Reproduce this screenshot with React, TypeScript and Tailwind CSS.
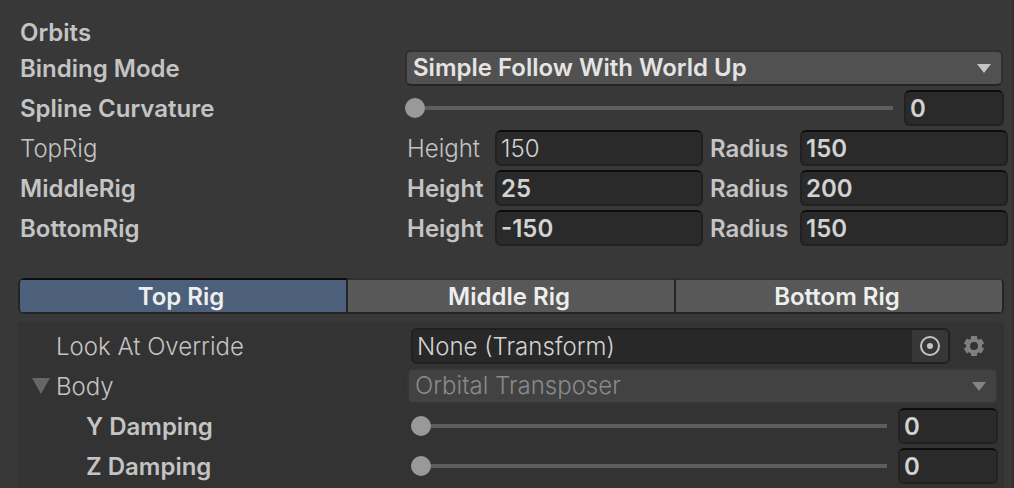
import { useState } from "react";

const rigs = [
    { name: "TopRig", height: "150", radius: "150", heightClass: "font-light" },
    { name: "MiddleRig", height: "25", radius: "200", heightClass: "font-semibold" },
    { name: "BottomRig", height: "-150", radius: "150", heightClass: "font-semibold" },
];

const tabs = ["Top Rig", "Middle Rig", "Bottom Rig"];

const field =
    "h-9 min-w-0 rounded-md border-2 border-[#212121] border-t-[#0d0d0d] bg-[#2a2a2a] pt-0.5 pl-1 text-[#d2d2d2] outline-none";

function Arrow({ className }: { className: string }) {
    return (
        <svg viewBox="0 0 14 9" className={className} aria-hidden="true">
            <path d="M0 0h14L7 9z" fill="currentColor" />
        </svg>
    );
}

function Slider({ id, name }: { id: string; name: string }) {
    const [value, setValue] = useState("0");

    return (
        <div className="flex flex-1 items-center gap-[11px]">
            <input
                id={id}
                type="range"
                min="0"
                max="20"
                value={value}
                onChange={(e) => setValue(e.target.value)}
                className="h-5 min-w-0 flex-1 appearance-none bg-transparent [&::-webkit-slider-runnable-track]:h-1 [&::-webkit-slider-runnable-track]:bg-[#5e5e5e] [&::-webkit-slider-thumb]:-mt-2 [&::-webkit-slider-thumb]:size-5 [&::-webkit-slider-thumb]:appearance-none [&::-webkit-slider-thumb]:rounded-full [&::-webkit-slider-thumb]:bg-[#999999]"
            />
            <input
                type="text"
                aria-label={name + " value"}
                value={value}
                onChange={(e) => setValue(e.target.value)}
                className={`${field} w-25 font-semibold`}
            />
        </div>
    );
}

export default function App() {
    const [tab, setTab] = useState("Top Rig");

    return (
        <div className="flex min-h-screen flex-col border-r-2 border-[#303030] bg-[#383838] pt-3.5 font-['Inter',sans-serif] text-2xl leading-[38px] text-[#c4c4c4]">
            <div className="pr-2 pl-5">
                <h1 className="h-9 font-semibold">Orbits</h1>

                <div className="flex flex-col gap-1">
                    <div className="flex h-9">
                        <label htmlFor="binding" className="w-[385px] shrink-0 font-semibold">Binding Mode</label>
                        <div className="relative mr-px flex-1">
                            <select
                                id="binding"
                                className="block h-9 w-full appearance-none rounded-md border-2 border-[#303030] border-b-[#242424] bg-[#515151] pl-1.5 leading-8 font-semibold text-[#e4e4e4] outline-none"
                            >
                                <option>Simple Follow With World Up</option>
                            </select>
                            <Arrow className="pointer-events-none absolute top-3.5 right-3 h-[9px] w-3.5 text-[#c4c4c4]" />
                        </div>
                    </div>

                    <div className="flex h-9">
                        <label htmlFor="spline" className="w-[385px] shrink-0 font-semibold">Spline Curvature</label>
                        <Slider id="spline" name="Spline Curvature" />
                    </div>

                    {rigs.map((rig) => (
                        <div key={rig.name} className="-mr-1 flex h-9">
                            <span className={`w-[387px] shrink-0 ${rig.heightClass}`}>{rig.name}</span>
                            <label htmlFor={rig.name + "-height"} className={`w-[88px] shrink-0 ${rig.heightClass}`}>Height</label>
                            <input
                                id={rig.name + "-height"}
                                type="text"
                                defaultValue={rig.height}
                                className={`${field} flex-1 ${rig.heightClass}`}
                            />
                            <label htmlFor={rig.name + "-radius"} className="ml-[7px] w-[90px] shrink-0 font-semibold">Radius</label>
                            <input
                                id={rig.name + "-radius"}
                                type="text"
                                defaultValue={rig.radius}
                                className={`${field} flex-1 font-semibold`}
                            />
                        </div>
                    ))}
                </div>
            </div>

            <div className="mt-8 mr-2 ml-[18px] flex overflow-hidden rounded-md border-x-2 border-[#242424]">
                {tabs.map((name) => (
                    <button
                        key={name}
                        type="button"
                        onClick={() => setTab(name)}
                        className={`h-9 flex-1 border-y-2 border-r-2 border-[#242424] pt-px pr-1 leading-8 font-semibold text-[#eeeeee] last:border-r-0 ${
                            tab === name ? "border-t-[#0d0d0d] bg-[#4c5f7b]" : "border-t-[#303030] bg-[#585858]"
                        }`}
                    >
                        {name}
                    </button>
                ))}
            </div>

            <div className="mt-2 mr-2 ml-[18px] flex flex-1 flex-col gap-1 bg-[#333333] pt-1.5 pr-1.5">
                <div className="flex h-9">
                    <label htmlFor="lookAt" className="w-[393px] shrink-0 pl-[38px] font-light">Look At Override</label>
                    <div className="flex min-w-0 flex-1 overflow-hidden rounded-md border-2 border-[#202020] bg-[#282828]">
                        <input
                            id="lookAt"
                            type="text"
                            readOnly
                            value="None (Transform)"
                            className="min-w-0 flex-1 pt-0.5 pl-1 font-light text-[#d2d2d2] outline-none"
                        />
                        <button type="button" aria-label="Select object" className="flex w-9 items-center justify-center bg-[#373737]">
                            <svg viewBox="0 0 20 20" className="size-5" aria-hidden="true">
                                <circle cx="10" cy="10" r="9" fill="none" stroke="#c4c4c4" strokeWidth="2" />
                                <circle cx="10" cy="10" r="3" fill="#c4c4c4" />
                            </svg>
                        </button>
                    </div>
                    <button type="button" aria-label="Settings" className="mr-3 ml-3 text-[#7f7f7f]">
                        <svg viewBox="-12 -12 24 24" className="size-6" aria-hidden="true">
                            <g fill="currentColor">
                                <rect x="-3" y="-10" width="6" height="20" />
                                <rect x="-3" y="-10" width="6" height="20" transform="rotate(60)" />
                                <rect x="-3" y="-10" width="6" height="20" transform="rotate(120)" />
                            </g>
                            <circle r="6" fill="none" stroke="currentColor" strokeWidth="4" />
                            <circle r="4" fill="#333333" />
                        </svg>
                    </button>
                </div>

                <div className="flex h-9">
                    <div className="flex w-[389px] shrink-0 items-center gap-1.5 pl-3.5">
                        <button type="button" aria-label="Toggle body">
                            <svg viewBox="0 0 18 16" className="h-4 w-[18px] text-[#666666]" aria-hidden="true">
                                <path d="M0 0h18L9 16z" fill="currentColor" />
                            </svg>
                        </button>
                        <label htmlFor="body" className="h-9 font-light">Body</label>
                    </div>
                    <div className="relative flex-1">
                        <select
                            id="body"
                            disabled
                            className="block h-9 w-full appearance-none rounded-md border-2 border-[#363636] bg-[#424242] pl-1.5 leading-8 font-light text-[#8a8a8a] opacity-100"
                        >
                            <option>Orbital Transposer</option>
                        </select>
                        <Arrow className="pointer-events-none absolute top-3.5 right-3 h-[9px] w-3.5 text-[#848484]" />
                    </div>
                </div>

                {["Y Damping", "Z Damping"].map((name) => (
                    <div key={name} className="flex h-9">
                        <label htmlFor={name} className="w-[393px] shrink-0 pl-[68px] font-semibold">{name}</label>
                        <Slider id={name} name={name} />
                    </div>
                ))}
            </div>
        </div>
    );
}
